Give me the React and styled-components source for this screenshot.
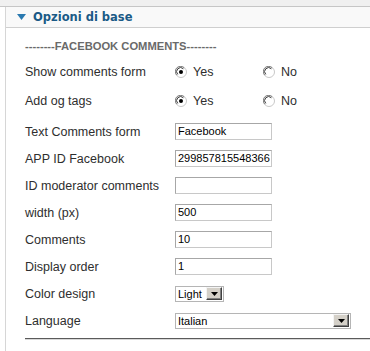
import React from "react";
import styled, { createGlobalStyle } from "styled-components";

const GlobalStyle = createGlobalStyle`
  html, body {
    margin: 0;
    padding: 0;
    background: #ffffff;
  }
  body {
    font-family: "Liberation Sans", Arial, sans-serif;
  }
`;

const Page = styled.div`
  width: 370px;
  height: 351px;
  overflow: hidden;
  background: #ffffff;
`;

const TopStrip = styled.div`
  height: 6px;
  background: #f0f0f0;
  border-bottom: 1px solid #c6c6c6;
`;

const Panel = styled.div`
  margin-left: 5px;
  border-left: 1px solid #d6d6d6;
  height: 344px;
`;

const Header = styled.div`
  display: flex;
  align-items: center;
  gap: 7px;
  height: 20px;
  padding-left: 11px;
  background: #f9f9f9;
  border-bottom: 1px solid #cfcfcf;
`;

const Title = styled.span`
  font-family: "DejaVu Sans", Verdana, sans-serif;
  font-weight: bold;
  font-size: 11.5px;
  color: #1a5a86;
`;

const Body = styled.div`
  padding-left: 19px;
`;

const Heading = styled.div`
  margin-top: 11px;
  height: 14px;
  line-height: 14px;
  font-size: 11.2px;
  font-weight: bold;
  color: #6a6a6a;
`;

const Row = styled.div`
  display: flex;
  align-items: center;
  height: ${({ $h }) => $h || 27}px;
  margin-top: ${({ $mt }) => $mt || 0}px;
`;

const Label = styled.div`
  width: 150px;
  flex: none;
  font-size: 12.5px;
  color: #2e2e2e;
`;

const Option = styled.label`
  display: flex;
  align-items: center;
  gap: 6px;
  width: 88px;
  font-size: 12.5px;
  color: #2e2e2e;
`;

const TextBox = styled.div`
  box-sizing: border-box;
  width: 97px;
  height: 17px;
  padding: 0 2px;
  border: 1px solid #a7a7a7;
  border-right-color: #c8c8c8;
  border-bottom-color: #c8c8c8;
  background: #ffffff;
  font-size: 11px;
  line-height: 15px;
  color: #000000;
  white-space: nowrap;
  overflow: hidden;
`;

const Select = styled.div`
  box-sizing: border-box;
  display: flex;
  align-items: center;
  justify-content: space-between;
  width: ${({ $w }) => $w}px;
  height: 16px;
  padding: 1px 1px 1px 2px;
  border: 1px solid #b5b5b5;
  background: #ffffff;
  font-size: 11px;
  color: #000000;
`;

const DropButton = styled.div`
  box-sizing: border-box;
  display: flex;
  align-items: center;
  justify-content: center;
  width: 16px;
  height: 13px;
  background: #d4d0c8;
  border: 1px solid;
  border-color: #f4f4f4 #404040 #404040 #f4f4f4;
  box-shadow: inset -1px -1px 0 #808080;
`;

const Rule = styled.div`
  margin-top: 4px;
  height: 1px;
  background: #5a5a5a;
  border-bottom: 1px solid #d8d8d8;
`;

const Triangle = () => (
  <svg width="9" height="6" viewBox="0 0 9 6">
    <polygon points="0,0 9,0 4.5,6" fill="#2a79b0" />
  </svg>
);

const Radio = ({ checked }) => (
  <svg width="12" height="12" viewBox="0 0 12 12">
    <circle cx="6" cy="6" r="5.5" fill="#ffffff" stroke="#c8c8c8" />
    <path d="M1.8 9.2 A4.6 4.6 0 0 1 9.2 1.8" fill="none" stroke="#808080" strokeWidth="1" />
    <path d="M2.8 8.4 A3.6 3.6 0 0 1 8.4 2.8" fill="none" stroke="#3a3a3a" strokeWidth="1" />
    {checked && <circle cx="6" cy="6" r="2" fill="#000000" />}
  </svg>
);

const Arrow = () => (
  <svg width="7" height="4" viewBox="0 0 7 4">
    <polygon points="0,0 7,0 3.5,4" fill="#000000" />
  </svg>
);

const radioRows = [
  { label: "Show comments form", h: 29 },
  { label: "Add og tags", h: 29 },
];

const textRows = [
  { label: "Text Comments form", value: "Facebook" },
  { label: "APP ID Facebook", value: "299857815548366" },
  { label: "ID moderator comments", value: "" },
  { label: "width (px)", value: "500" },
  { label: "Comments", value: "10" },
  { label: "Display order", value: "1" },
];

const selectRows = [
  { label: "Color design", value: "Light", w: 49 },
  { label: "Language", value: "Italian", w: 176 },
];

export default function App() {
  return (
    <Page>
      <GlobalStyle />
      <TopStrip />
      <Panel>
        <Header>
          <Triangle />
          <Title>Opzioni di base</Title>
        </Header>
        <Body>
          <Heading>--------FACEBOOK COMMENTS--------</Heading>
          {radioRows.map((r, i) => (
            <Row key={r.label} $h={r.h} $mt={i === 0 ? 4 : 0}>
              <Label>{r.label}</Label>
              <Option>
                <Radio checked />
                Yes
              </Option>
              <Option>
                <Radio />
                No
              </Option>
            </Row>
          ))}
          {textRows.map((r, i) => (
            <Row key={r.label} $mt={i === 0 ? 3 : 0}>
              <Label>{r.label}</Label>
              <TextBox>{r.value}</TextBox>
            </Row>
          ))}
          {selectRows.map((r) => (
            <Row key={r.label}>
              <Label>{r.label}</Label>
              <Select $w={r.w}>
                <span>{r.value}</span>
                <DropButton>
                  <Arrow />
                </DropButton>
              </Select>
            </Row>
          ))}
          <Rule />
        </Body>
      </Panel>
    </Page>
  );
}
